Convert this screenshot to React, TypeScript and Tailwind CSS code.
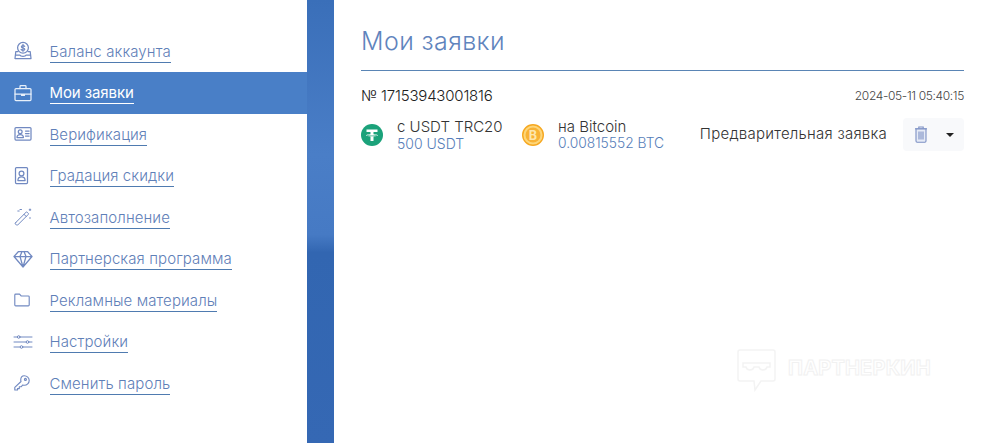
import type { ReactNode } from "react"

const iconProps = {
  width: 20,
  height: 20,
  viewBox: "0 0 20 20",
  fill: "none",
  stroke: "currentColor",
  strokeWidth: 1.25,
  strokeLinecap: "round" as const,
  strokeLinejoin: "round" as const,
}

const icons: Record<string, ReactNode> = {
  balance: (
    <svg {...iconProps}>
      <circle cx="10" cy="6.800" r="5.400" />
      <path d="M11.700 5.300c-.4-.6-1-.8-1.700-.8-1 0-1.600.5-1.600 1.200 0 1.800 3.400.8 3.400 2.500 0 .8-.8 1.200-1.800 1.200-.8 0-1.400-.3-1.900-.9M10 3.300v7" />
      <path d="M5 10.500H2.800L2 17.500h16l-.8-7H15M2.300 14h4.500c.4.900 1.600 1.400 3.200 1.400s2.800-.5 3.200-1.400h4.500" />
    </svg>
  ),
  briefcase: (
    <svg {...iconProps}>
      <rect x="2" y="5.500" width="16" height="12" rx="1" />
      <path d="M7 5.500V3.400c0-.5.3-.8.8-.8h4.400c.5 0 .8.3.8.8v2.100M2 11h16M8.600 11v1.400h2.800V11" />
    </svg>
  ),
  idCard: (
    <svg {...iconProps}>
      <rect x="2" y="3.500" width="16" height="12.500" rx="1" />
      <circle cx="7.200" cy="7.700" r="1.900" />
      <path d="M4 13.500c0-2 1.200-3 3.200-3s3.200 1 3.200 3zM12.500 7h3.600M12.500 9.500h3.600M12.500 12h3.600" />
    </svg>
  ),
  badge: (
    <svg {...iconProps}>
      <rect x="2.500" y="1.500" width="12" height="16" rx="1" />
      <circle cx="8.500" cy="7.500" r="2.400" />
      <path d="M4.900 14.500c0-2.300 1.400-3.600 3.600-3.600s3.600 1.300 3.600 3.600z" />
    </svg>
  ),
  wand: (
    <svg {...iconProps} strokeWidth={1}>
      <path d="M2.500 15.800 13 5.300c.4-.4.900-.4 1.300 0l.9.900c.4.400.4.900 0 1.300L4.700 18c-.4.400-.9.400-1.300 0l-.9-.9c-.4-.4-.4-.9 0-1.300zM11 7.300l2.200 2.200" />
      <path d="M7 2.500h1.500M4.800 4h1.400M17 2v1.500M16.200 2.800h1.600M17 10.500v1" />
    </svg>
  ),
  diamond: (
    <svg {...iconProps} width={20} height={18} viewBox="0 0 20 18">
      <path d="M5.500 1.500h9l4.500 5L10 17 1 6.500zM1 6.500h18M7 6.500l3 10.500 3-10.500M7 6.500l2-5M13 6.500l-2-5" />
    </svg>
  ),
  folder: (
    <svg {...iconProps} width={18} height={18} viewBox="0 0 20 20">
      <path d="M2 4.500c0-.6.4-1 1-1h4.300l1.700 2h8c.6 0 1 .4 1 1v9c0 .6-.4 1-1 1H3c-.6 0-1-.4-1-1z" />
    </svg>
  ),
  sliders: (
    <svg {...iconProps} strokeWidth={1}>
      <path d="M1 5h3.500M7 5h12M1 10h12M16 10h3M1 15h6M10 15h9" />
      <circle cx="5.700" cy="5" r="1.300" />
      <circle cx="14.500" cy="10" r="1.300" />
      <circle cx="8.500" cy="15" r="1.300" />
    </svg>
  ),
  key: (
    <svg {...iconProps} width={18} height={18} viewBox="0 0 20 20">
      <path d="M12.500 2c3 0 5.500 2.300 5.500 5.200s-2.500 5.300-5.500 5.300c-.6 0-1.100-.1-1.600-.3L9 14.200H7v2H5v1.600H2v-3l6.900-6.500c-.2-.5-.3-1-.3-1.500C8.600 4 10 2 12.500 2z" />
      <circle cx="13.800" cy="6" r="1.100" />
    </svg>
  ),
}

const menu = [
  { label: "Баланс аккаунта", icon: "balance" },
  { label: "Мои заявки", icon: "briefcase", active: true },
  { label: "Верификация", icon: "idCard" },
  { label: "Градация скидки", icon: "badge" },
  { label: "Автозаполнение", icon: "wand" },
  { label: "Партнерская программа", icon: "diamond" },
  { label: "Рекламные материалы", icon: "folder" },
  { label: "Настройки", icon: "sliders" },
  { label: "Сменить пароль", icon: "key" },
]

function TetherIcon() {
  return (
    <svg width="22" height="22" viewBox="0 0 22 22" className="shrink-0">
      <circle cx="11" cy="11" r="11" fill="#1ba27a" />
      <path d="M5.500 5.500h11v2.500h-4v2.200c2.300.1 4.400.5 4.400 1.100s-2.100 1-4.400 1.100V17h-3v-4.600c-2.300-.1-4.400-.5-4.400-1.100s2.100-1 4.400-1.100V8h-4z" fill="#fff" />
      <path d="M6 11.300c1.200.4 3 .6 5 .6s3.800-.2 5-.6" fill="none" stroke="#1ba27a" strokeWidth=".7" />
    </svg>
  )
}

function BitcoinIcon() {
  return (
    <svg width="22" height="22" viewBox="0 0 22 22" className="shrink-0">
      <circle cx="11" cy="11" r="10.300" fill="#fdd67a" stroke="#f6a821" strokeWidth="1.400" />
      <circle cx="11" cy="11" r="7.500" fill="#f8b236" />
      <text x="11" y="15.500" textAnchor="middle" fontSize="12.500" fontWeight="700" fill="#fde6ad" fontFamily="Inter, sans-serif">B</text>
    </svg>
  )
}

function TrashIcon() {
  return (
    <svg width="14" height="17" viewBox="0 0 14 17" fill="#e6ebf6" stroke="#7c90c4" strokeWidth="1.100" className="shrink-0">
      <path d="M1 2.800h12" fill="none" />
      <path d="M4.800 2.500V1h4.400v1.500" fill="none" />
      <path d="M2 3h10v12c0 .7-.4 1.200-1.100 1.200H3.100C2.400 16.200 2 15.700 2 15z" />
      <path d="M5 5.500v8M7 5.500v8M9 5.500v8" fill="none" />
    </svg>
  )
}

function Watermark() {
  return (
    <div className="absolute left-[737px] top-[349px] flex items-center gap-[12px] text-[#f3f3f3]">
      <svg width="39" height="43" viewBox="0 0 39 43" fill="none" stroke="currentColor" strokeWidth="1.500">
        <path d="M3 1h33c1.200 0 2 .8 2 2v27c0 1.200-.8 2-2 2H24l-6 9-1-9H3c-1.200 0-2-.8-2-2V3c0-1.200.8-2 2-2z" />
        <path d="M6 14h27v4h-3c-.5 2-2 3-4 3s-3.500-1-4-3h-5c-.5 2-2 3-4 3s-3.500-1-4-3H6z" />
      </svg>
      <span className="mb-[6px] text-[20px] font-bold tracking-[0.2px] text-white [-webkit-text-stroke:1px_#f1f1f1]">ПАРТНЕРКИН</span>
    </div>
  )
}

export default function App() {
  return (
    <div className="relative flex h-[443px] w-[982px] overflow-hidden bg-white font-['Inter','Noto_Sans',sans-serif]">
      <aside className="w-[307px] shrink-0 pt-[30.5px]">
        {menu.map((item) => (
          <div
            key={item.label}
            className={`flex h-[41.5px] items-center pl-[13px] ${item.active ? "bg-[#497fc7] text-white" : "text-[#5f80b8]"}`}
          >
            <span className={`flex w-[36.5px] shrink-0 ${item.active ? "text-[#e8f0fa]" : "text-[#7189c1]"}`}>
              {icons[item.icon]}
            </span>
            <span className={`mt-[3px] border-b pb-[1px] text-[15px] leading-[18px] ${item.active ? "border-white font-normal tracking-[-0.1px]" : "border-[#4f7bb0] font-light tracking-[0.1px]"}`}>
              {item.label}
            </span>
          </div>
        ))}
      </aside>

      <div className="w-[27px] shrink-0 bg-[linear-gradient(180deg,#3a6fb9_0%,#4a7ec7_35%,#467ac4_53%,#3266b1_57%,#3568b4_100%)]" />

      <main className="min-w-0 flex-1 pl-[27px] pr-[18px] pt-[24px]">
        <h1 className="border-b border-[#5a85b5] pb-[12px] text-[25px] font-light leading-[34px] tracking-[0.4px] text-[#5f84bd]">
          Мои заявки
        </h1>

        <div className="mt-[15px] flex items-center justify-between">
          <span className="text-[15px] font-light leading-[20px] tracking-[-0.2px] text-[#222]">№ 17153943001816</span>
          <span className="text-[12px] font-light tracking-[-0.35px] text-[#444]">2024-05-11 05:40:15</span>
        </div>

        <div className="mt-[12px] flex items-center">
          <TetherIcon />
          <div className="ml-[14px] w-[125px] shrink-0">
            <div className="text-[15px] font-light leading-[18px] text-[#333]">с USDT TRC20</div>
            <div className="text-[14px] font-light leading-[15px] text-[#557db8]">500 USDT</div>
          </div>
          <BitcoinIcon />
          <div className="ml-[14px]">
            <div className="text-[15px] font-light leading-[18px] text-[#333]">на Bitcoin</div>
            <div className="text-[13.8px] font-light leading-[15px] text-[#557db8]">0.00815552 BTC</div>
          </div>
          <span className="ml-auto text-[15px] font-light tracking-[0.25px] text-[#333]">Предварительная заявка</span>
          <div className="ml-[16px] flex h-[33px] w-[61px] items-center rounded-[4px] bg-[#f8f9fb] pl-[11px]">
            <TrashIcon />
            <span className="ml-[18px] h-0 w-0 border-x-[4px] border-t-[4px] border-x-transparent border-t-[#222]" />
          </div>
        </div>
      </main>

      <Watermark />
    </div>
  )
}
